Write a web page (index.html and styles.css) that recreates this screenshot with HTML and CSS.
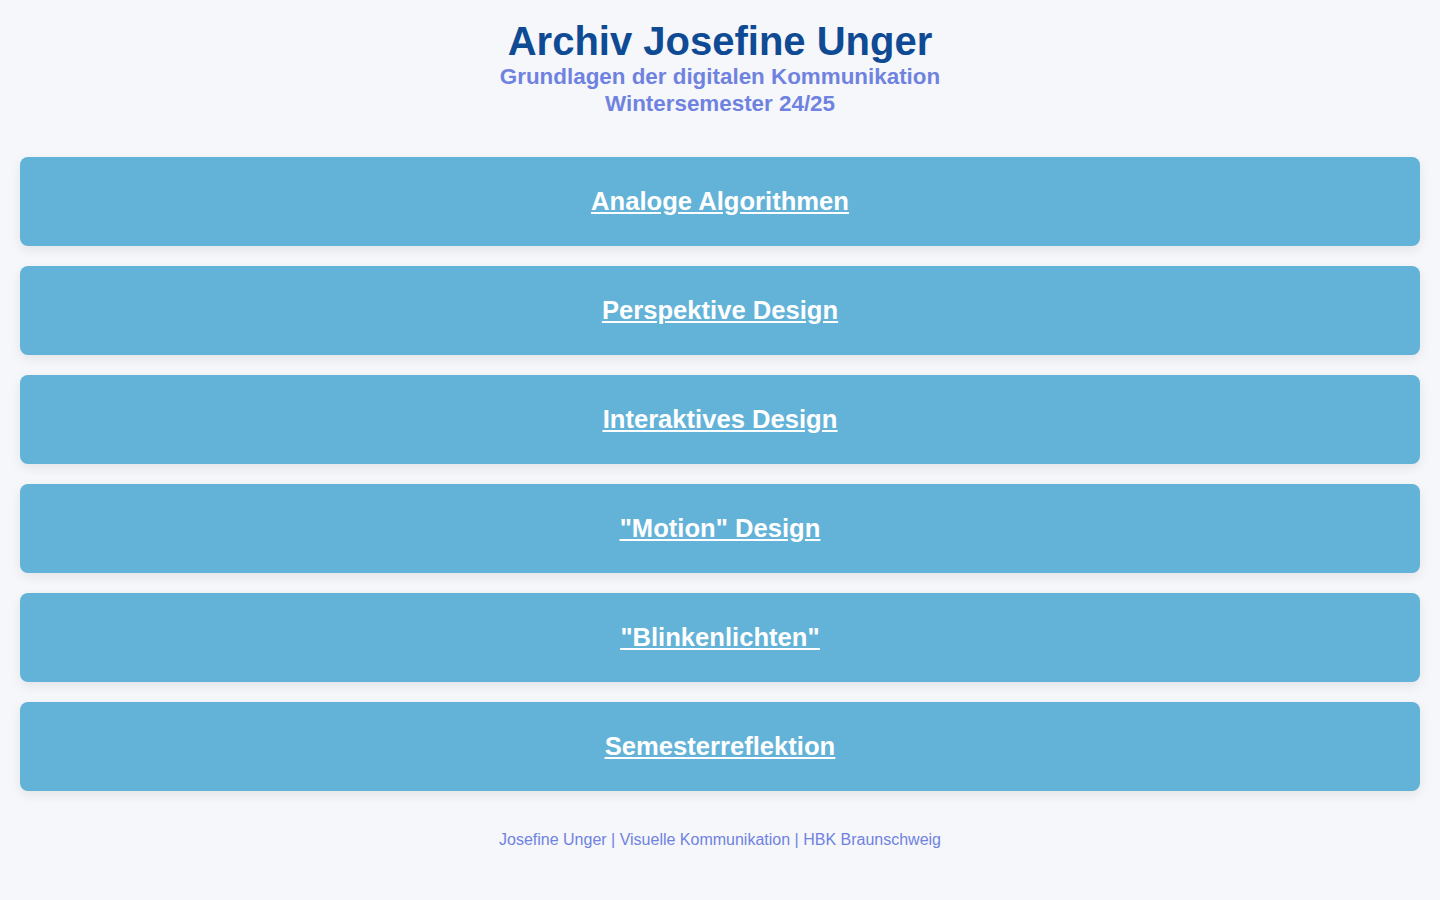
FILE: index.html
```html
<!DOCTYPE html>
<html lang="de">
<head>
<meta charset="utf-8">
<title>Archiv Josefine Unger</title>
<link rel="stylesheet" href="styles.css">
</head>
<body>
<header class="header">
  <h1 class="title">Archiv Josefine Unger</h1>
  <p class="subtitle">Grundlagen der digitalen Kommunikation<br>Wintersemester 24/25</p>
</header>
<main class="list">
  <a class="card" href="#"><span class="card-label">Analoge Algorithmen</span></a>
  <a class="card" href="#"><span class="card-label">Perspektive Design</span></a>
  <a class="card" href="#"><span class="card-label">Interaktives Design</span></a>
  <a class="card" href="#"><span class="card-label">"Motion" Design</span></a>
  <a class="card" href="#"><span class="card-label">"Blinkenlichten"</span></a>
  <a class="card" href="#"><span class="card-label">Semesterreflektion</span></a>
</main>
<footer class="footer">Josefine Unger | Visuelle Kommunikation | HBK Braunschweig</footer>
</body>
</html>
```

FILE: styles.css
```css
html, body {
  margin: 0;
  padding: 0;
}
body {
  background: #f5f7fa;
  font-family: "Liberation Sans", Arial, sans-serif;
  padding: 19px 20px 20px;
}
.header {
  text-align: center;
  margin-bottom: 40px;
}
.title {
  margin: 0;
  font-size: 40px;
  line-height: 44px;
  font-weight: bold;
  color: #0f4a94;
}
.subtitle {
  margin: 0;
  font-size: 22.4px;
  line-height: 27px;
  font-weight: bold;
  color: #7082e0;
}
.list {
  display: flex;
  flex-direction: column;
  gap: 20px;
}
.card {
  display: flex;
  align-items: center;
  justify-content: center;
  height: 89px;
  background: #63b3d8;
  border-radius: 8px;
  box-shadow: 0 4px 12px rgba(0, 0, 0, 0.08);
  color: #ffffff;
  font-size: 25.6px;
  font-weight: bold;
}
.card-label {
  text-decoration: underline;
  line-height: 30px;
  margin-top: -1px;
}
.footer {
  text-align: center;
  margin-top: 40px;
  font-size: 16px;
  color: #7082e0;
}
```
